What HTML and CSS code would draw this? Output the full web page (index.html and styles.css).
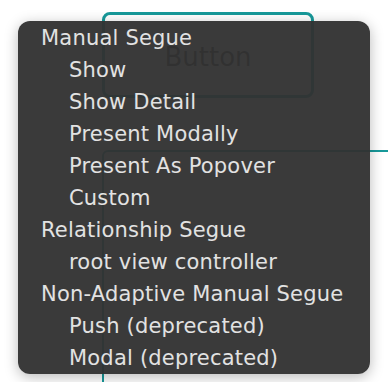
FILE: index.html
```html
<!DOCTYPE html>
<html lang="en">
<head>
  <meta charset="UTF-8">
  <title>Segue Menu</title>
  <link rel="stylesheet" href="styles.css">
</head>
<body>
  <div class="canvas">
    <div class="sb-button">Button</div>
    <div class="sb-view"></div>

    <ul class="segue-menu">
      <li class="group">Manual Segue</li>
      <li class="item">Show</li>
      <li class="item">Show Detail</li>
      <li class="item">Present Modally</li>
      <li class="item">Present As Popover</li>
      <li class="item">Custom</li>
      <li class="group">Relationship Segue</li>
      <li class="item">root view controller</li>
      <li class="group">Non-Adaptive Manual Segue</li>
      <li class="item">Push (deprecated)</li>
      <li class="item">Modal (deprecated)</li>
    </ul>
  </div>
</body>
</html>
```

FILE: styles.css
```css
body {
  margin: 0;
  background: #fff;
  font-family: "DejaVu Sans", sans-serif;
  overflow: hidden;
}
.canvas {
  position: relative;
  width: 388px;
  height: 382px;
  overflow: hidden;
}
/* storyboard objects sitting behind the popup */
.sb-button {
  position: absolute;
  left: 102px;
  top: 12px;
  width: 212px;
  height: 86px;
  box-sizing: border-box;
  border: 3px solid #17999a;
  border-radius: 8px;
  display: flex;
  align-items: center;
  justify-content: center;
  font-size: 26px;
  color: #2a2a2a;
  padding-top: 3px;
}
.sb-view {
  position: absolute;
  left: 102px;
  top: 150px;
  width: 320px;
  height: 260px;
  border: 2px solid #17999a;
  border-radius: 6px;
}
.segue-menu {
  position: absolute;
  left: 18px;
  top: 21px;
  width: 352px;
  margin: 0;
  padding: 1px 0 0;
  list-style: none;
  background: rgba(50, 50, 50, 0.96);
  border-radius: 12px;
  box-shadow: 0 3px 14px rgba(0, 0, 0, 0.28);
}
.segue-menu li {
  height: 32px;
  line-height: 32px;
  font-size: 21px;
  letter-spacing: 0.2px;
  color: #e2e2e2;
  white-space: nowrap;
}
.segue-menu .group {
  padding-left: 23px;
}
.segue-menu .item {
  padding-left: 51px;
}
```
